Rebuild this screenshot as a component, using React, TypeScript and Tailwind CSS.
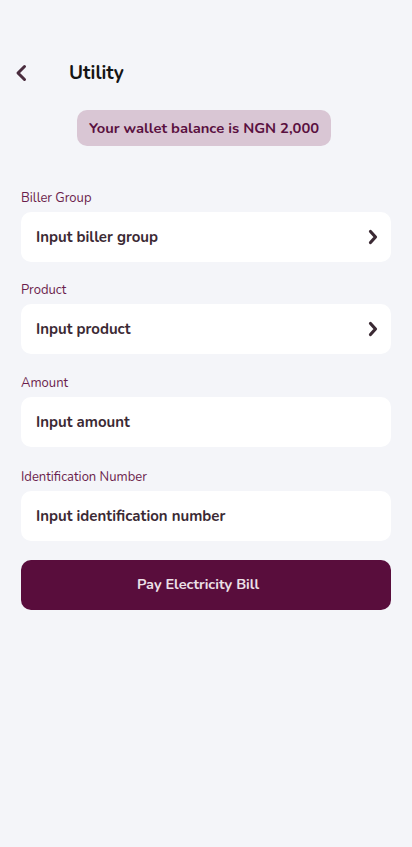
import React from "react";

const font = { fontFamily: "Nunito, Lato, 'Noto Sans', sans-serif" };

function Field({ label, placeholder, chevron, className }: { label: string; placeholder: string; chevron?: boolean; className?: string }) {
  return (
    <div className={"flex flex-col " + (className ?? "")}>
      <div className="text-[13px] leading-[18px] text-[#6b1d4c] mb-[5px]">{label}</div>
      <div className="h-[50px] rounded-[10px] bg-white flex items-center justify-between pl-[15px] pr-[13px]">
        <span className="text-[15px] font-bold text-[#3b2a34]">{placeholder}</span>
        {chevron && (
          <svg width="10" height="16" viewBox="0 0 10 16" fill="none">
            <path d="M2.5 2.5L7.5 8L2.5 13.5" stroke="#3b2a34" strokeWidth="3.2" strokeLinecap="round" strokeLinejoin="round" />
          </svg>
        )}
      </div>
    </div>
  );
}

export default function App() {
  return (
    <div className="min-h-[847px] w-full bg-[#f4f5f9] pt-[59px]" style={font}>
      <div className="flex items-center h-[28px] pl-[13px]">
        <svg width="16" height="18" viewBox="0 0 16 18" fill="none">
          <path d="M11.5 2.5L5 9L11.5 15.5" stroke="#4a2c3e" strokeWidth="3" strokeLinecap="round" strokeLinejoin="round" />
        </svg>
        <span className="ml-[40px] text-[19px] font-bold text-[#141414]">Utility</span>
      </div>
      <div className="flex justify-center mt-[23px] pr-[4px]">
        <div className="h-[36px] px-[12px] rounded-[10px] bg-[#d9c6d4] flex items-center text-[14.75px] font-bold text-[#5a1040]">
          Your wallet balance is NGN 2,000
        </div>
      </div>
      <div className="px-[21px] mt-[43px] flex flex-col">
        <Field label="Biller Group" placeholder="Input biller group" chevron />
        <Field className="mt-[19px]" label="Product" placeholder="Input product" chevron />
        <Field className="mt-[20px]" label="Amount" placeholder="Input amount" />
        <Field className="mt-[21px]" label="Identification Number" placeholder="Input identification number" />
        <button className="mt-[19px] h-[50px] rounded-[10px] bg-[#590d3c] pr-[16px] text-[14.5px] font-bold text-[#ece0e8]">
          Pay Electricity Bill
        </button>
      </div>
    </div>
  );
}
